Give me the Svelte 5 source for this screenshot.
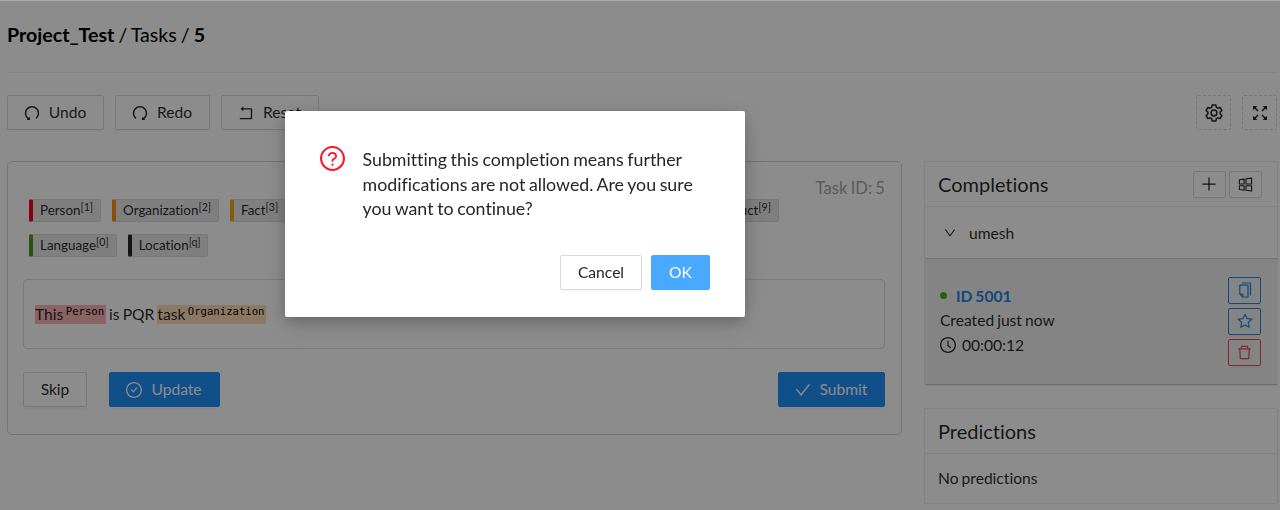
<script>
  const ring = 'M512 64C264.6 64 64 264.6 64 512s200.6 448 448 448 448-200.6 448-448S759.4 64 512 64zm0 820c-205.4 0-372-166.6-372-372s166.6-372 372-372 372 166.6 372 372-166.6 372-372 372z';
  const icons = {
    undo: 'M511.4 124C290.5 124.3 112 303 112 523.9c0 128 60.2 242 153.8 315.2l-37.5 48c-4.1 5.3-.3 13 6.3 12.9l167-.8c5.2 0 9-4.9 7.7-9.9L369.8 727a8 8 0 00-14.1-3L315 776.1c-10.2-8-20-16.7-29.3-26a318.64 318.64 0 01-68.6-101.7C200.4 609 192 567.1 192 523.9s8.4-85.1 25.1-124.5c16.1-38.1 39.2-72.3 68.6-101.7 29.4-29.4 63.6-52.5 101.7-68.6C426.9 212.4 468.8 204 512 204s85.1 8.4 124.5 25.1c38.1 16.1 72.3 39.2 101.7 68.6 29.4 29.4 52.5 63.6 68.6 101.7 16.7 39.4 25.1 81.3 25.1 124.5s-8.4 85.1-25.1 124.5a318.64 318.64 0 01-68.6 101.7c-7.5 7.5-15.3 14.5-23.4 21.2a7.93 7.93 0 00-1.2 11.1l39.4 50.5c2.8 3.5 7.9 4.1 11.4 1.3C854.5 760.8 912 649.1 912 523.9c0-221.1-179.4-400.2-400.6-399.9z',
    rollback: 'M793 242H366v-74c0-6.7-7.7-10.4-12.9-6.3l-142 112a8 8 0 000 12.6l142 112c5.2 4.1 12.9.4 12.9-6.3v-74h415v470H175c-4.4 0-8 3.6-8 8v60c0 4.4 3.6 8 8 8h618c35.3 0 64-28.7 64-64V306c0-35.3-28.7-64-64-64z',
    check: 'M912 190h-69.9c-9.8 0-19.1 4.5-25.1 12.2L404.7 724.5 207 474a32 32 0 00-25.1-12.2H112c-6.7 0-10.4 7.7-6.3 12.9l273.9 347c12.8 16.2 37.4 16.2 50.3 0l488.4-618.9c4.1-5.1.4-12.8-6.3-12.8z',
    checkCircle: 'M699 353h-46.9c-10.2 0-19.9 4.9-25.9 13.3L469 584.3l-71.2-98.8c-6-8.3-15.6-13.3-25.9-13.3H325c-6.5 0-10.3 7.4-6.5 12.7l124.6 172.8a31.8 31.8 0 0051.7 0l210.6-292c3.9-5.3.1-12.7-6.4-12.7z' + ring,
    question: 'M623.6 316.7C593.6 290.4 554 276 512 276s-81.6 14.5-111.6 40.7C369.2 344 352 380.7 352 420v7.6c0 4.4 3.6 8 8 8h48c4.4 0 8-3.6 8-8V420c0-44.1 43.1-80 96-80s96 35.9 96 80c0 31.1-22 59.6-56.1 72.7-21.2 8.1-39.2 22.3-52.1 40.9-13.1 19-19.9 41.8-19.9 64.9V620c0 4.4 3.6 8 8 8h48c4.4 0 8-3.6 8-8v-22.7a48.3 48.3 0 0130.9-44.8c59-22.7 97.1-74.7 97.1-132.5.1-39.3-17.1-76-48.3-103.3zM472 732a40 40 0 1080 0 40 40 0 10-80 0z' + ring,
    clock: 'M686.7 638.6L544.1 535.5V288c0-4.4-3.6-8-8-8H488c-4.4 0-8 3.6-8 8v275.4c0 2.6 1.2 5 3.3 6.5l165.4 120.6c3.6 2.6 8.6 1.8 11.2-1.7l28.6-39c2.6-3.7 1.8-8.7-1.8-11.2z' + ring,
    down: 'M884 256h-75c-5.1 0-9.9 2.5-12.9 6.6L512 654.2 227.9 262.6c-3-4.1-7.8-6.6-12.9-6.6h-75c-6.5 0-10.3 7.4-6.5 12.7l352.6 486.1c12.8 17.6 39 17.6 51.7 0l352.6-486.1c3.9-5.3.1-12.7-6.4-12.7z',
    trash: 'M360 184h-8c4.4 0 8-3.6 8-8v8h304v-8c0 4.4 3.6 8 8 8h-8v72h72v-80c0-35.3-28.7-64-64-64H352c-35.3 0-64 28.7-64 64v80h72v-72zm504 72H160c-17.7 0-32 14.3-32 32v32c0 4.4 3.6 8 8 8h60.4l24.7 523c1.6 34.1 29.8 61 63.9 61h454c34.2 0 62.3-26.8 63.9-61l24.7-523H888c4.4 0 8-3.6 8-8v-32c0-17.7-14.3-32-32-32zM731.3 840H292.7l-24.2-512h487l-24.2 512z',
    plus: 'M477 142h70v335h335v70H547v335h-70V547H142v-70h335z'
  };
  const rows = [
    [['Person', '1', '#f5001d'], ['Organization', '2', '#fa8c16'], ['Fact', '3', '#faa414'], ['Product', '9', '#13c2c2']],
    [['Language', '0', '#4a9c22'], ['Location', 'q', '#262626']]
  ];
</script>

{#snippet icon(name, size, flip = false)}
  <svg class="icon" class:flip viewBox="64 64 896 896" width={size} height={size}><path d={icons[name]} /></svg>
{/snippet}

<div class="page">
  <header><b>Project_Test</b> / Tasks / <b>5</b></header>

  <div class="toolbar">
    <button class="btn undo">{@render icon('undo', 16)}Undo</button>
    <button class="btn redo">{@render icon('undo', 16, true)}Redo</button>
    <button class="btn reset">{@render icon('rollback', 16)}Reset</button>
    <span class="grow"></span>
    <button class="btn dashed">
      <svg class="line" width="18" height="18" viewBox="0 0 18 18"><path d="M7.2 1h3.6l.5 2.3 1.5.9 2.3-.8 1.8 3.1-1.8 1.6v1.8l1.8 1.6-1.8 3.1-2.3-.8-1.5.9-.5 2.3H7.2l-.5-2.3-1.5-.9-2.3.8-1.8-3.1 1.8-1.6V8.100L1.100 6.500l1.800-3.100 2.300.800 1.500-.900z" /><circle cx="9" cy="9" r="2.900" /></svg>
    </button>
    <button class="btn dashed">
      <svg class="line" width="16" height="16" viewBox="0 0 16 16"><path d="M6 6 2.500 2.500M10 6l3.500-3.500M6 10l-3.500 3.500M10 10l3.500 3.500" /><path class="solid" d="M1 1h4.300L1 5.300zM15 1v4.300L10.700 1zM1 15v-4.300L5.300 15zM15 15h-4.300l4.300-4.300z" /></svg>
    </button>
  </div>

  <div class="columns">
    <main class="card">
      <div class="task-id">Task ID: 5</div>
      <div class="labels">
        {#each rows as row}
          <div class="label-row">
            {#each row as [name, key, color]}
              <span class="tag" style="border-left-color: {color}">{name}<sup>[{key}]</sup></span>
            {/each}
          </div>
        {/each}
      </div>
      <div class="text">
        <span class="hl person">This<sup>Person</sup></span><span>&nbsp;is PQR&nbsp;</span><span class="hl org">task<sup>Organization</sup></span>
      </div>
      <div class="actions">
        <button class="btn skip">Skip</button>
        <button class="btn primary update">{@render icon('checkCircle', 16)}Update</button>
        <span class="grow"></span>
        <button class="btn primary submit">{@render icon('check', 16)}Submit</button>
      </div>
    </main>

    <aside>
      <section class="panel">
        <div class="panel-head">
          <h2>Completions</h2>
          <button class="btn small">{@render icon('plus', 16)}</button>
          <button class="btn small"><svg class="line thin" width="15" height="15" viewBox="0 0 16 16"><path d="M1.500 3 6.500 2.300v5.200h-5zM8.500 2 14.500 1.200v6.300h-6zM1.500 9.300h5v4.800l-5-.7zM8.500 9.300h6v5.700l-6-.8z" /></svg></button>
        </div>
        <div class="user">{@render icon('down', 12)}<span>umesh</span></div>
        <div class="completion">
          <div class="info">
            <div class="id"><i></i><b>ID 5001</b></div>
            <div>Created just now</div>
            <div class="time">{@render icon('clock', 16)}00:00:12</div>
          </div>
          <div class="tools">
            <button class="btn small blue"><svg class="line thin" width="16" height="16" viewBox="0 0 16 16"><path d="M4.800 1h8.700v12.500M2.800 3.200h8.200v11.800H5.600L2.800 12.200zM2.800 12h3v3" /></svg></button>
            <button class="btn small blue"><svg class="line thin" width="16" height="16" viewBox="0 0 16 16"><path d="m8 1.300 2 4.300 4.800.6-3.500 3.300.9 4.800L8 12l-4.200 2.300.9-4.800L1.200 6.200 6 5.600z" /></svg></button>
            <button class="btn small red">{@render icon('trash', 15)}</button>
          </div>
        </div>
      </section>
      <section class="panel predictions">
        <div class="panel-head"><h2>Predictions</h2></div>
        <div class="none">No predictions</div>
      </section>
    </aside>
  </div>
</div>

<div class="mask">
  <div class="modal" role="dialog">
    <div class="message">
      {@render icon('question', 25)}
      <p>Submitting this completion means further modifications are not allowed. Are you sure you want to continue?</p>
    </div>
    <div class="confirm">
      <button class="btn cancel">Cancel</button>
      <button class="btn ok">OK</button>
    </div>
  </div>
</div>

<style>
  :global(body) { background: #fff; overflow: hidden; }
  .page, .mask { font-family: Lato, sans-serif; font-size: 15.600px; line-height: 24px; color: rgba(0, 0, 0, .85); box-sizing: border-box; font-variant-ligatures: none; word-spacing: -.06em; }
  .page *, .mask * { box-sizing: border-box; }
  .page { height: 510px; padding: 0 2px 0 7px; overflow: hidden; }
  .icon { fill: currentColor; flex: none; display: block; }
  .flip { transform: scaleX(-1); }
  .line { fill: none; stroke: currentColor; stroke-width: 1.500; stroke-linejoin: round; display: block; }
  .thin { stroke-width: 1.200; }
  .solid { fill: currentColor; stroke: none; }
  .grow { flex: 1; }
  header { height: 73px; padding-top: 23px; border-bottom: 1px solid #f0f0f0; font-size: 19.600px; color: #000; }
  .btn { font: inherit; line-height: 1; color: inherit; word-spacing: inherit; height: 35px; padding: 0; margin: 0; background: #fff; border: 1px solid #d9d9d9; border-radius: 2px; box-shadow: 0 2px 0 rgba(0, 0, 0, .025); display: flex; align-items: center; justify-content: center; gap: 9px; flex: none; }
  .toolbar { display: flex; padding-top: 22px; height: 88px; }
  .undo { width: 97px; margin-right: 11px; padding-right: 1px; }
  .redo { width: 95px; margin-right: 11px; padding-right: 1px; }
  .reset { width: 98px; padding-right: 1px; }
  .dashed { width: 35px; border-style: dashed; margin-left: 11px; box-shadow: none; }
  .dashed:last-child { margin-right: 1px; }
  .columns { display: flex; gap: 22px; align-items: flex-start; }
  .card { width: 895px; height: 274px; border: 1px solid #d4d4d5; border-radius: 5px; padding: 15px 16px 15px 15px; }
  .task-id { text-align: right; color: #a8a8a8; height: 21.500px; line-height: 22px; font-size: 16.600px; }
  .labels { display: flex; flex-direction: column; gap: 11.500px; padding-left: 6px; width: 756px; }
  .label-row { display: flex; gap: 11px; }
  .label-row > .tag:nth-child(4) { margin-left: auto; }
  .tag { height: 23.500px; line-height: 21.500px; padding: 0 7px; font-size: 13.400px; background: #e8e8e8; border: 1px solid #d9d9d9; border-left: 4px solid; border-radius: 2px; }
  .tag sup { font-size: 10.600px; line-height: 0; vertical-align: 4px; }
  .text { margin-top: 22px; height: 70px; border: 1px solid #dedede; border-radius: 4px; padding: 23px 11px; display: flex; align-items: center; }
  .hl { height: 19px; line-height: 19px; display: inline-flex; }
  .hl sup { font: 10.600px/1 "DejaVu Sans Mono", monospace; color: #000; margin: 1px 2px 0 2.500px; }
  .person { background: #fbb4b9; }
  .org { background: #fedcb8; }
  .actions { display: flex; margin-top: 23px; }
  .skip { width: 64px; margin-right: 22px; }
  .primary { background: #2090f8; border-color: #2090f8; color: #fff; }
  .update { width: 111px; padding-right: 1px; }
  .submit { width: 107px; padding-right: 1px; }
  aside { width: 354px; }
  .panel { border: 1px solid #ededed; border-radius: 2px; }
  .panel-head { display: flex; align-items: center; height: 45px; padding: 0 15px 0 13px; border-bottom: 1px solid #ededed; gap: 3.500px; }
  h2 { flex: 1; margin: 0; font-size: 20px; font-weight: 400; line-height: 28px; }
  .small { width: 33px; height: 27px; }
  .user { display: flex; align-items: center; gap: 13px; height: 52px; padding-left: 19px; border-bottom: 1px solid #d2d2d2; }
  .completion { display: flex; justify-content: space-between; height: 126px; padding: 17.500px 16px 0 15px; background: #f0f0f0; border-bottom: 1px solid #ccc; }
  .info { padding-top: 7px; line-height: 24.500px; }
  .id { display: flex; align-items: center; gap: 9px; color: #2185e0; }
  .id i { width: 7px; height: 7px; border-radius: 50%; background: #42b518; }
  .time { display: flex; align-items: center; gap: 6px; }
  .tools { display: flex; flex-direction: column; gap: 4px; }
  .blue { color: #2187e8; border-color: #2187e8; background: transparent; }
  .red { color: #f04850; border-color: #f04850; background: transparent; }
  .predictions { margin-top: 22px; }
  .none { height: 49px; padding: 12px 13px; }
  .mask { position: fixed; inset: 0; background: rgba(0, 0, 0, .45); border-top: 1px solid #adadad; }
  .modal { width: 460px; height: 206px; margin: 110px 0 0 285px; padding: 35px; background: #fff; border-radius: 2px; box-shadow: 0 4px 14px rgba(0, 0, 0, .2), 0 8px 30px rgba(0, 0, 0, .12); }
  .message { display: flex; gap: 17.500px; height: 109px; color: #ff1525; }
  .message p { margin: 1px 0 0; width: 346px; font-size: 17.800px; line-height: 24.500px; color: #262626; }
  .confirm { display: flex; justify-content: flex-end; gap: 9px; color: #262626; }
  .cancel { width: 82px; }
  .ok { width: 59px; background: #48a9ff; border-color: #48a9ff; color: #fff; }
</style>
